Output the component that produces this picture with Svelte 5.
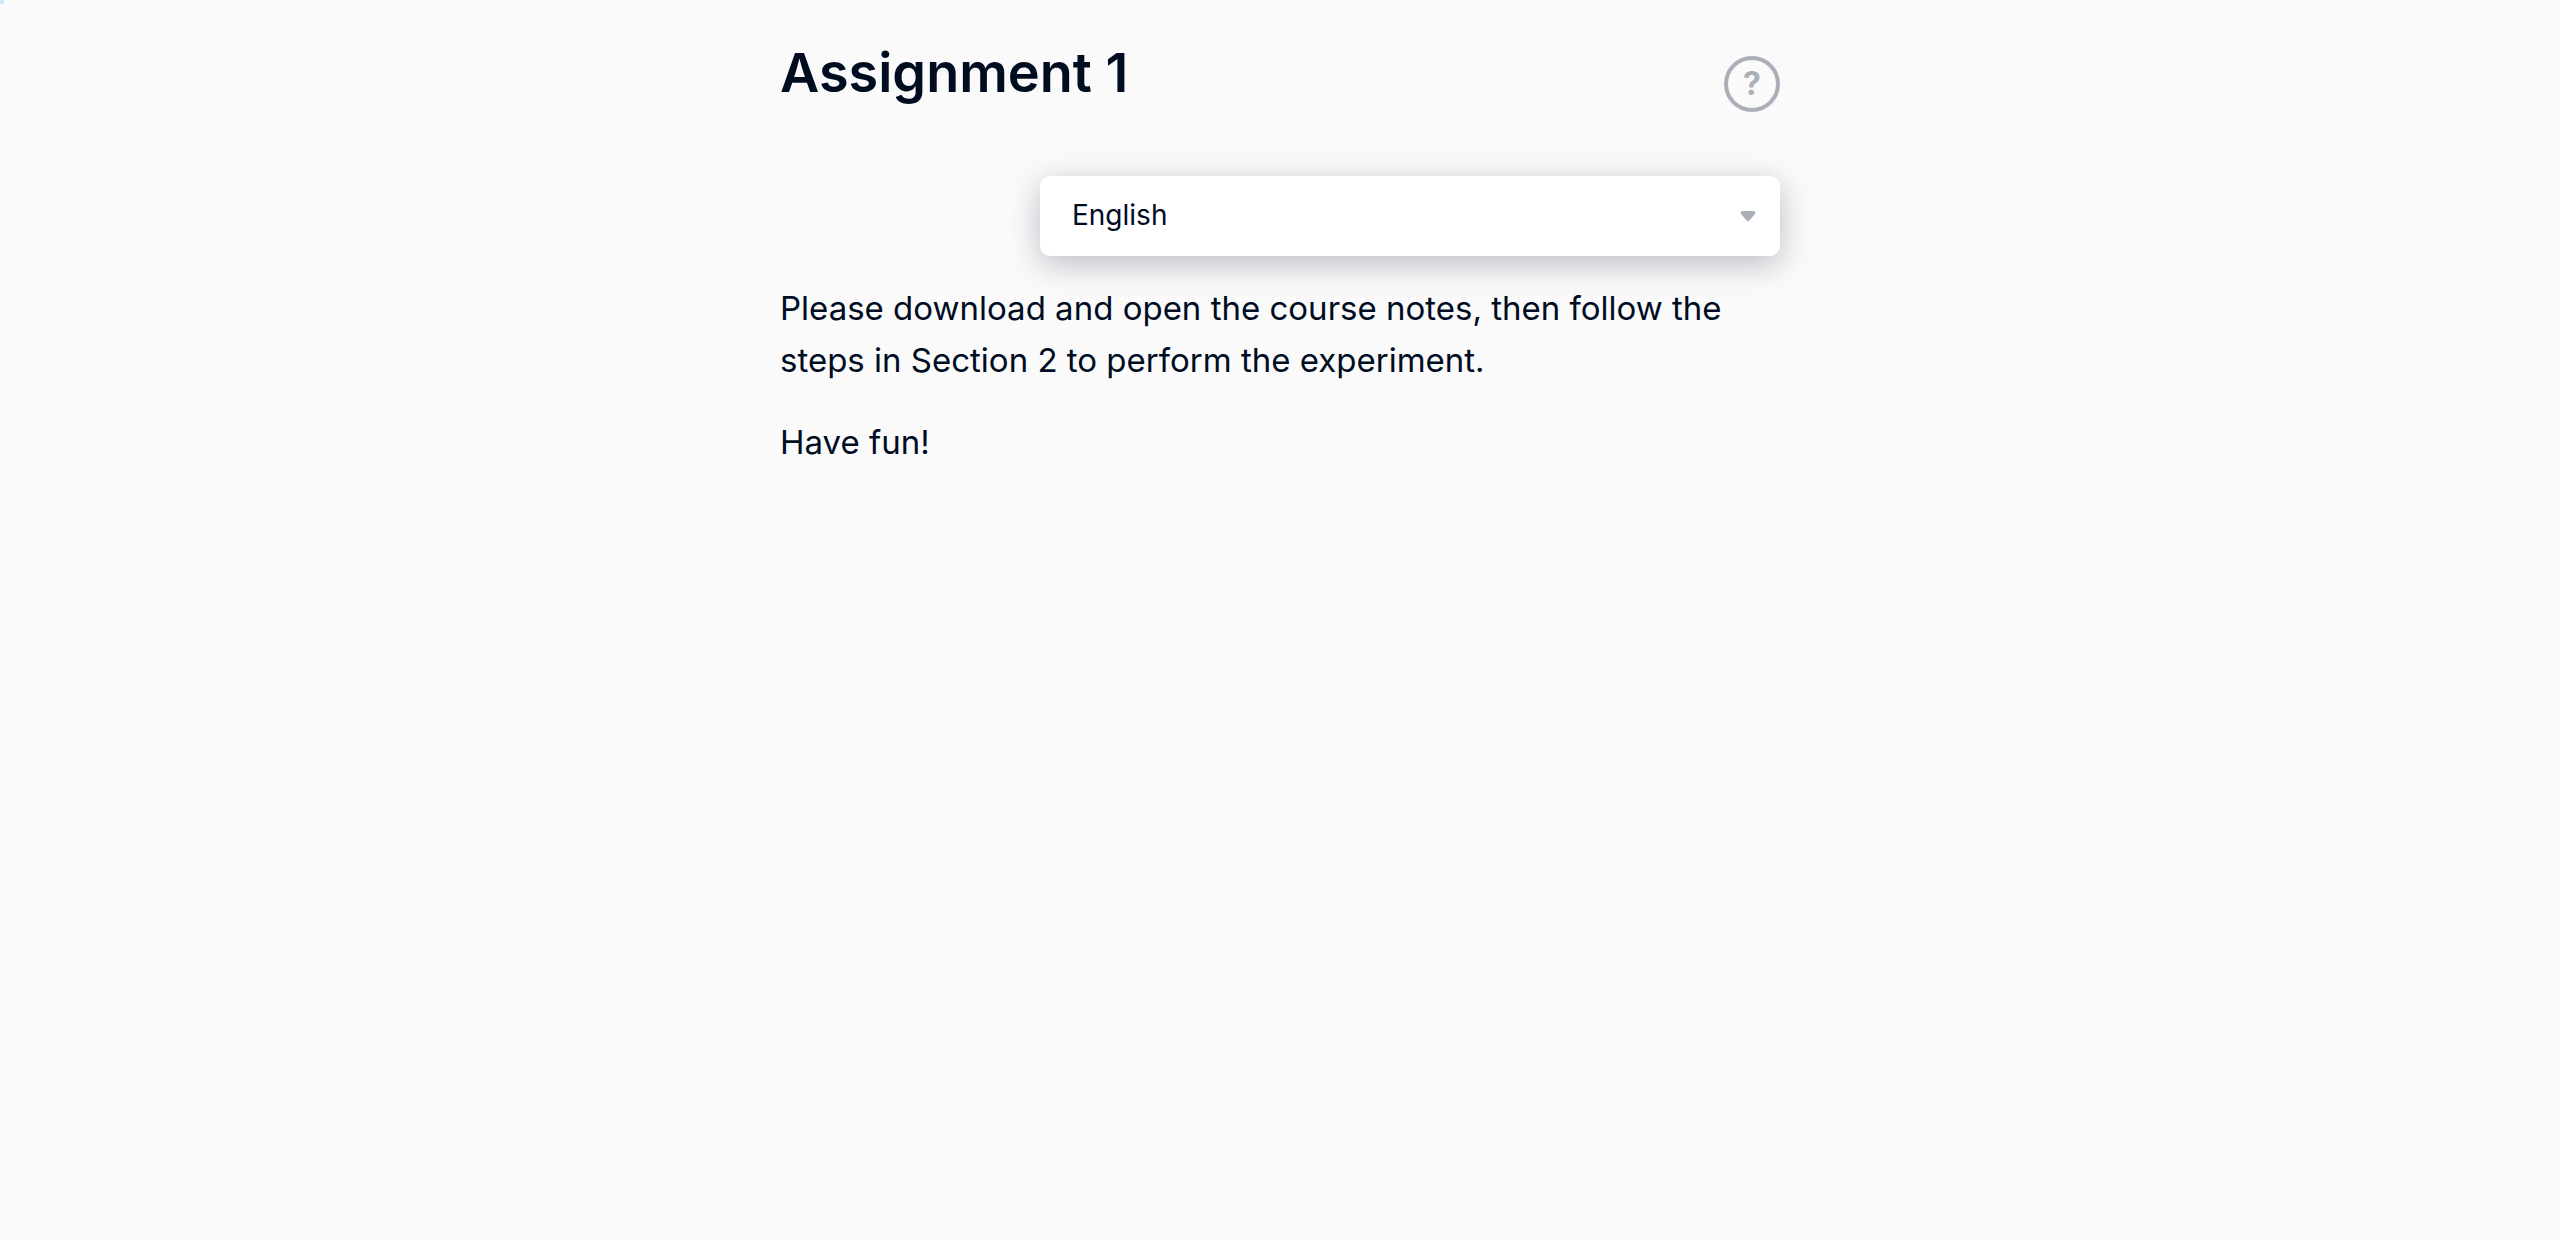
<script lang="ts">
  interface Language {
    code: string;
    label: string;
  }

  const languages: Language[] = [{ code: 'en', label: 'English' }];

  const paragraphs = [
    'Please download and open the course notes, then follow the steps in Section 2 to perform the experiment.',
    'Have fun!',
  ];

  let language = $state('en');
</script>

<svelte:head>
  <title>Assignment 1</title>
</svelte:head>

<div class="progress" aria-hidden="true"></div>

<main class="page">
  <header class="header">
    <h1>Assignment 1</h1>
    <button type="button" class="help" aria-label="Help">?</button>
  </header>

  <div class="language">
    <select aria-label="Language" bind:value={language}>
      {#each languages as item}
        <option value={item.code}>{item.label}</option>
      {/each}
    </select>
    <svg class="caret" viewBox="0 0 16 12" aria-hidden="true">
      <path d="M2 0H14Q16 0 16 2Q16 3 15 4L9.300 10.500Q8 12 6.700 10.500L1 4Q0 3 0 2Q0 0 2 0Z" />
    </svg>
  </div>

  <section class="content">
    {#each paragraphs as text}
      <p>{text}</p>
    {/each}
  </section>
</main>

<style>
  :global(body) {
    background: #fafafb;
  }

  .progress {
    position: fixed;
    top: 0;
    left: 0;
    width: 4px;
    height: 4px;
    background: #cde7f3;
  }

  .page {
    box-sizing: border-box;
    max-width: 1080px;
    margin: 0 auto;
    padding: 40px;
    color: #000c1f;
    font-family: Inter, 'Liberation Sans', sans-serif;
  }

  .header {
    display: flex;
    align-items: flex-start;
    justify-content: space-between;
    margin-bottom: 64px;
  }

  h1 {
    margin: 0;
    font-size: 54px;
    font-weight: 600;
    line-height: 66px;
  }

  .help {
    flex: none;
    width: 56px;
    height: 56px;
    margin-top: 16px;
    padding: 0;
    border: 4px solid #abb0b8;
    border-radius: 50%;
    background: transparent;
    color: #abb0b8;
    font-family: inherit;
    font-size: 32px;
    font-weight: 700;
    line-height: 48px;
    cursor: pointer;
  }

  .language {
    position: relative;
    width: 74%;
    margin-left: auto;
  }

  select {
    display: block;
    width: 100%;
    height: 80px;
    padding: 0 64px 2px 32px;
    border: 0;
    border-radius: 10px;
    appearance: none;
    background: #fff;
    box-shadow: 0 8px 32px rgba(0, 12, 31, 0.25);
    color: inherit;
    font-family: inherit;
    font-size: 28px;
    line-height: 36px;
    cursor: pointer;
  }

  .caret {
    position: absolute;
    top: 35px;
    right: 24px;
    width: 16px;
    height: 11px;
    fill: #abb0b8;
    pointer-events: none;
  }

  .content {
    margin-top: 26px;
  }

  p {
    margin: 0 0 30px;
    font-size: 33px;
    line-height: 52px;
  }
</style>
